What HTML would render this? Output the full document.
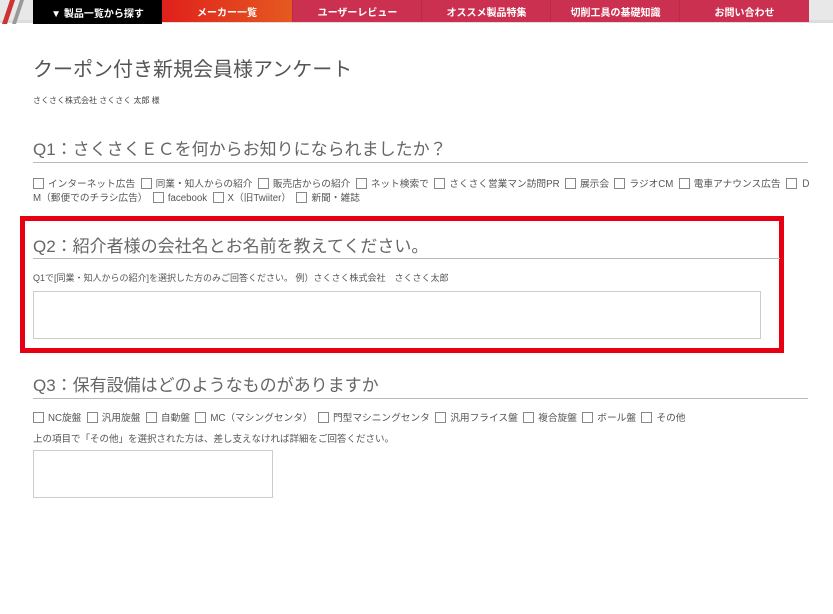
<!DOCTYPE html>
<html><head><meta charset="utf-8"><style>
body{margin:0;width:833px;height:614px;background:#fff;font-family:"Liberation Sans","Noto Sans CJK JP",sans-serif;color:#555;position:relative;overflow:hidden}
.a{position:absolute;white-space:nowrap}
.nav{position:absolute;top:0;height:22px;color:#fff;font-size:10px;font-weight:bold;display:flex;align-items:center;justify-content:center}
.h{position:absolute;left:33px;font-size:17px;color:#666;letter-spacing:0}
.line{position:absolute;left:33px;width:775px;height:1px;background:#bbb}
.cb{display:inline-block;width:9px;height:9px;border:1px solid #888;vertical-align:-2px;margin-right:4px;background:#fff}
.row{position:absolute;left:33px;font-size:9.5px;color:#555}
.ta{position:absolute;border:1px solid #ccc;background:#fff}
</style></head><body>
<div class="a" style="left:0;top:0;width:833px;height:22px;background:#e8e8e8"></div>
<div class="a" style="left:0;top:20px;width:833px;height:3px;background:#ddd"></div>
<svg class="a" style="left:0;top:0" width="33" height="24"><path d="M2 24 L10 0 L15 0 L7 24Z" fill="#c33"/><path d="M12 24 L20 0 L24 0 L16 24Z" fill="#999"/></svg>
<div class="nav" style="left:33px;width:129px;background:#000;top:0;height:24px">▼ 製品一覧から探す</div>
<div class="nav" style="left:162px;width:130px;background:linear-gradient(90deg,#e0201c,#e55a20)">メーカー一覧</div>
<div class="nav" style="left:292px;width:129px;background:#cc3050;border-left:1px solid #b82a47">ユーザーレビュー</div>
<div class="nav" style="left:421px;width:129px;background:#cc3050;border-left:1px solid #b82a47">オススメ製品特集</div>
<div class="nav" style="left:550px;width:129px;background:#cc3050;border-left:1px solid #b82a47">切削工具の基礎知識</div>
<div class="nav" style="left:679px;width:129px;background:#cc3050;border-left:1px solid #b82a47">お問い合わせ</div>

<div class="a" style="left:33px;top:53px;font-size:20px;color:#555">クーポン付き新規会員様アンケート</div>
<div class="a" style="left:33px;top:95px;font-size:8px;color:#444">さくさく株式会社 さくさく 太郎 様</div>

<div class="h" style="top:135px">Q1：さくさくＥＣを何からお知りになられましたか？</div>
<div class="line" style="top:162px"></div>
<div class="row" style="top:176px;font-size:9.7px"><span class="cb"></span>インターネット広告 &nbsp;<span class="cb"></span>同業・知人からの紹介 &nbsp;<span class="cb"></span>販売店からの紹介 &nbsp;<span class="cb"></span>ネット検索で &nbsp;<span class="cb"></span>さくさく営業マン訪問PR &nbsp;<span class="cb"></span>展示会 &nbsp;<span class="cb"></span>ラジオCM &nbsp;<span class="cb"></span>電車アナウンス広告 &nbsp;<span class="cb"></span>Ｄ</div>
<div class="row" style="top:190px;font-size:9.7px">M（郵便でのチラシ広告） &nbsp;<span class="cb"></span>facebook &nbsp;<span class="cb"></span>X（旧Twiiter） &nbsp;<span class="cb"></span>新聞・雑誌</div>

<div class="a" style="left:20px;top:216px;width:754px;height:127px;border:5px solid #e60012"></div>
<div class="h" style="top:232px">Q2：紹介者様の会社名とお名前を教えてください。</div>
<div class="line" style="top:258px;width:747px"></div>
<div class="row" style="top:271px;font-size:9px">Q1で[同業・知人からの紹介]を選択した方のみご回答ください。 例）さくさく株式会社　さくさく太郎</div>
<div class="ta" style="left:33px;top:291px;width:726px;height:46px"></div>

<div class="h" style="top:371px">Q3：保有設備はどのようなものがありますか</div>
<div class="line" style="top:398px"></div>
<div class="row" style="top:410px;font-size:9.7px"><span class="cb"></span>NC旋盤 &nbsp;<span class="cb"></span>汎用旋盤 &nbsp;<span class="cb"></span>自動盤 &nbsp;<span class="cb"></span>MC（マシングセンタ） &nbsp;<span class="cb"></span>門型マシニングセンタ &nbsp;<span class="cb"></span>汎用フライス盤 &nbsp;<span class="cb"></span>複合旋盤 &nbsp;<span class="cb"></span>ボール盤 &nbsp;<span class="cb"></span>その他</div>
<div class="row" style="top:431px">上の項目で「その他」を選択された方は、差し支えなければ詳細をご回答ください。</div>
<div class="ta" style="left:33px;top:450px;width:238px;height:46px"></div>
</body></html>
